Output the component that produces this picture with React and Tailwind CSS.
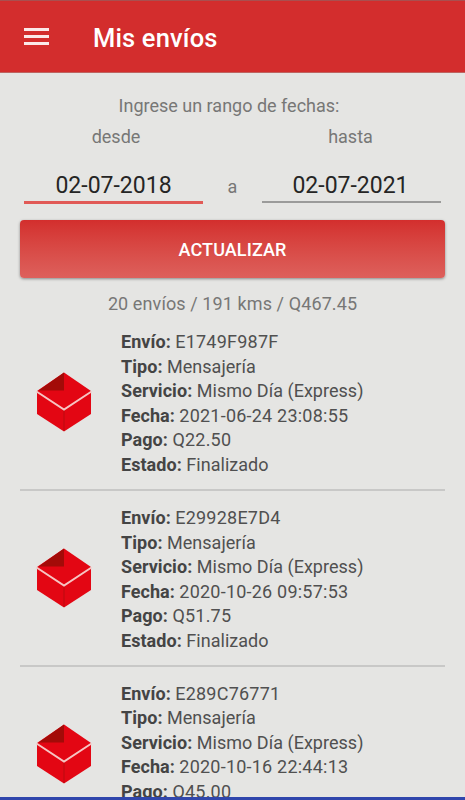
const shipments = [
  { id: 'E1749F987F', date: '2021-06-24 23:08:55', price: 'Q22.50' },
  { id: 'E29928E7D4', date: '2020-10-26 09:57:53', price: 'Q51.75' },
  { id: 'E289C76771', date: '2020-10-16 22:44:13', price: 'Q45.00' },
];

function BoxIcon() {
  return (
    <svg className="-mt-[3px] ml-[15.5px] h-[60px] w-14 shrink-0" viewBox="0 0 56 60">
      <path d="M28 .5 55 19v23L28 59.5 1 42V19z" fill="#e30613" />
      <path d="M28 .5V18.500H2.500z" fill="#a30b08" />
      <path d="M28 38v21" stroke="#b90a10" strokeWidth="1" />
      <path d="M.5 19.500 28 37.500 55.500 19.500" fill="none" stroke="#f6c5c3" strokeWidth="2" />
    </svg>
  );
}

function Line({ label, value, numeric }) {
  return (
    <div className="whitespace-nowrap">
      <b className="font-bold tracking-[0.05px] text-[#444444]">{label}:</b>{' '}
      <span className={numeric ? 'tracking-[0.22px]' : 'tracking-[0.03px]'}>{value}</span>
    </div>
  );
}

function Shipment({ item }) {
  return (
    <article className="mx-5 flex h-[175.8px] shrink-0 items-center border-b-2 border-[#c8c8c7] pt-[4px]">
      <BoxIcon />
      <div className="ml-[29.5px] text-[18px] leading-[24.6px] text-[#505050]">
        <Line label="Envío" value={item.id} numeric />
        <Line label="Tipo" value="Mensajería" />
        <Line label="Servicio" value="Mismo Día (Express)" />
        <Line label="Fecha" value={item.date} numeric />
        <Line label="Pago" value={item.price} numeric />
        <Line label="Estado" value="Finalizado" />
      </div>
    </article>
  );
}

export default function App() {
  return (
    <div className="flex h-[800px] w-[465px] flex-col overflow-hidden border-b-[3px] border-[#3046ac] bg-[#e5e5e3] font-['Roboto',sans-serif] text-[#777776]">
      <header className="flex h-[73px] shrink-0 items-center border-t border-b border-t-[#a94f4f] border-b-[#bd6461] bg-[#d32d2d] pl-6 text-white">
        <div className="flex w-[25px] flex-col gap-[4.500px]">
          <span className="h-[2.500px] bg-[#fbe9e9]" />
          <span className="h-[2.500px] bg-[#fbe9e9]" />
          <span className="h-[2.500px] bg-[#fbe9e9]" />
        </div>
        <h1 className="ml-[44px] pt-[3px] text-[25.500px] font-medium leading-8 tracking-[0.15px]">Mis envíos</h1>
      </header>
      <main className="flex min-h-0 flex-1 flex-col overflow-hidden">
        <p className="mt-[21px] shrink-0 text-center text-[18px] leading-6">
          <span className="-ml-[7px]">Ingrese un rango de fechas:</span>
        </p>
        <div className="mt-[7px] flex shrink-0 justify-between px-6 text-center text-[18px]">
          <div className="w-[179px]">
            <div className="leading-6">
              <span className="ml-[5px]">desde</span>
            </div>
            <div className="mt-[19px] h-[36px] border-b-[3px] border-[#e15a56] text-[23px] leading-[35px] text-[#252525]">02-07-2018</div>
          </div>
          <div className="mt-[50px] leading-6">a</div>
          <div className="w-[179px]">
            <div className="pr-[2px] leading-6">hasta</div>
            <div className="mt-[19px] h-[35px] border-b-2 border-[#9b9b9a] pr-[2px] text-[23px] leading-[35px] text-[#252525]">02-07-2021</div>
          </div>
        </div>
        <button className="mx-5 mt-4 h-[58px] shrink-0 rounded bg-linear-to-b from-[#d32e2d] to-[#dd605c] text-[18px] font-medium tracking-[0.1px] text-white shadow-[0_1px_3px_#0006]">
          ACTUALIZAR
        </button>
        <p className="mt-[14px] -mb-px shrink-0 text-center text-[18px] leading-6 tracking-[0.1px]">20 envíos / 191 kms / Q467.45</p>
        {shipments.map((item) => (
          <Shipment key={item.id} item={item} />
        ))}
      </main>
    </div>
  );
}
